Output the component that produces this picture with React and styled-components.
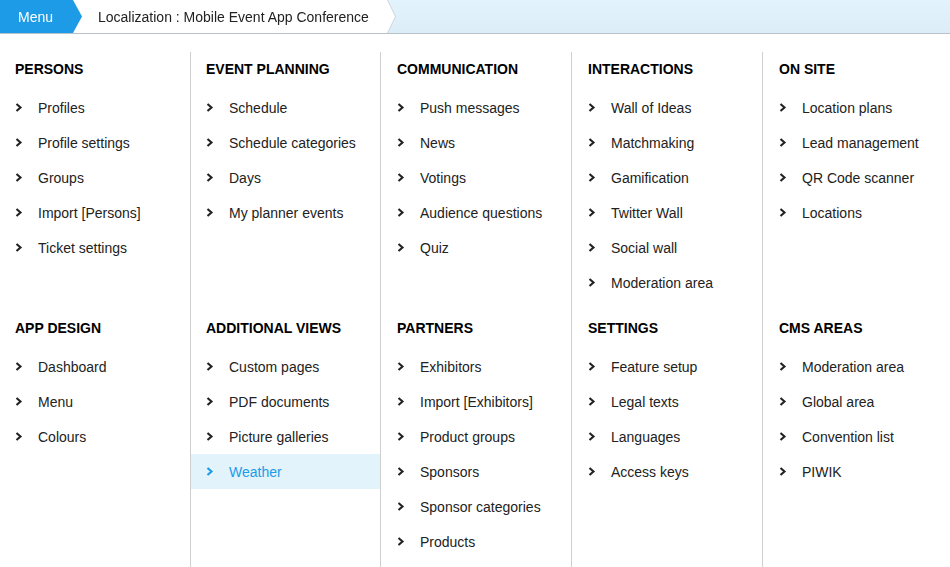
import React from 'react';
import styled, { createGlobalStyle } from 'styled-components';

const GlobalStyle = createGlobalStyle`
  body {
    margin: 0;
    background: #fff;
    font-family: "Liberation Sans", Arial, Helvetica, sans-serif;
    color: #222;
  }
`;

const Header = styled.header`
  height: 33px;
  border-bottom: 1px solid #b8c2c8;
  background: linear-gradient(#e2f3fd, #dcedf7);
  display: flex;
`;

const Crumbs = styled.div`
  filter: drop-shadow(1px 0 0 #cbd6dd);
`;

const CrumbBar = styled.div`
  width: 395px;
  height: 33px;
  background: #fff;
  display: flex;
  align-items: center;
  clip-path: polygon(0 0, 387px 0, 395px 50%, 387px 100%, 0 100%);
`;

const MenuTab = styled.div`
  width: 82px;
  height: 33px;
  box-sizing: border-box;
  padding-left: 18px;
  display: flex;
  align-items: center;
  background: #1d9be6;
  color: #fff;
  font-size: 14px;
  clip-path: polygon(0 0, 73px 0, 82px 50%, 73px 100%, 0 100%);
`;

const Title = styled.span`
  margin-left: 16px;
  font-size: 14px;
  color: #222;
`;

const Grid = styled.div`
  margin-top: 18px;
  display: grid;
  grid-template-columns: 190px 190px 191px 191px 1fr;
`;

const Cell = styled.section`
  border-left: ${p => (p.first ? 'none' : '1px solid #cfcfcf')};
  padding-bottom: ${p => (p.top ? '11px' : '0')};
  padding-left: ${p => (p.shift ? '1px' : '0')};
  min-height: ${p => (p.top ? 'auto' : '256px')};
`;

const Heading = styled.h3`
  margin: 0 0 3px;
  height: 35px;
  line-height: 35px;
  padding-left: 15px;
  font-size: 14px;
  font-weight: bold;
  color: #000;
  text-transform: uppercase;
`;

const Item = styled.div`
  height: 35px;
  display: flex;
  align-items: center;
  padding-left: 15px;
  font-size: 14px;
  color: ${p => (p.active ? '#1d9be6' : '#222')};
  background: ${p => (p.active ? '#e2f3fc' : 'transparent')};
`;

const Chevron = styled.svg`
  width: 8px;
  height: 9px;
  margin-right: 15px;
  flex-shrink: 0;
`;

const rows = [
  [
    { title: 'Persons', items: ['Profiles', 'Profile settings', 'Groups', 'Import [Persons]', 'Ticket settings'] },
    { title: 'Event planning', items: ['Schedule', 'Schedule categories', 'Days', 'My planner events'] },
    { title: 'Communication', items: ['Push messages', 'News', 'Votings', 'Audience questions', 'Quiz'] },
    { title: 'Interactions', items: ['Wall of Ideas', 'Matchmaking', 'Gamification', 'Twitter Wall', 'Social wall', 'Moderation area'] },
    { title: 'On site', items: ['Location plans', 'Lead management', 'QR Code scanner', 'Locations'] },
  ],
  [
    { title: 'App design', items: ['Dashboard', 'Menu', 'Colours'] },
    { title: 'Additional views', items: ['Custom pages', 'PDF documents', 'Picture galleries', 'Weather'] },
    { title: 'Partners', items: ['Exhibitors', 'Import [Exhibitors]', 'Product groups', 'Sponsors', 'Sponsor categories', 'Products'] },
    { title: 'Settings', items: ['Feature setup', 'Legal texts', 'Languages', 'Access keys'] },
    { title: 'CMS areas', items: ['Moderation area', 'Global area', 'Convention list', 'PIWIK'] },
  ],
];

function Arrow() {
  return (
    <Chevron viewBox="0 0 8 9">
      <polyline points="1.5,1 5.5,4.5 1.5,8" fill="none" stroke="currentColor" strokeWidth="2.1" />
    </Chevron>
  );
}

export default function App() {
  return (
    <>
      <GlobalStyle />
      <Header>
        <Crumbs>
          <CrumbBar>
            <MenuTab>Menu</MenuTab>
            <Title>Localization : Mobile Event App Conference</Title>
          </CrumbBar>
        </Crumbs>
      </Header>
      <Grid>
        {rows.map((row, r) =>
          row.map((col, c) => (
            <Cell key={r + '-' + c} first={c === 0} shift={c >= 2} top={r === 0}>
              <Heading>{col.title}</Heading>
              {col.items.map(item => (
                <Item key={item} active={item === 'Weather'}>
                  <Arrow />
                  {item}
                </Item>
              ))}
            </Cell>
          ))
        )}
      </Grid>
    </>
  );
}
